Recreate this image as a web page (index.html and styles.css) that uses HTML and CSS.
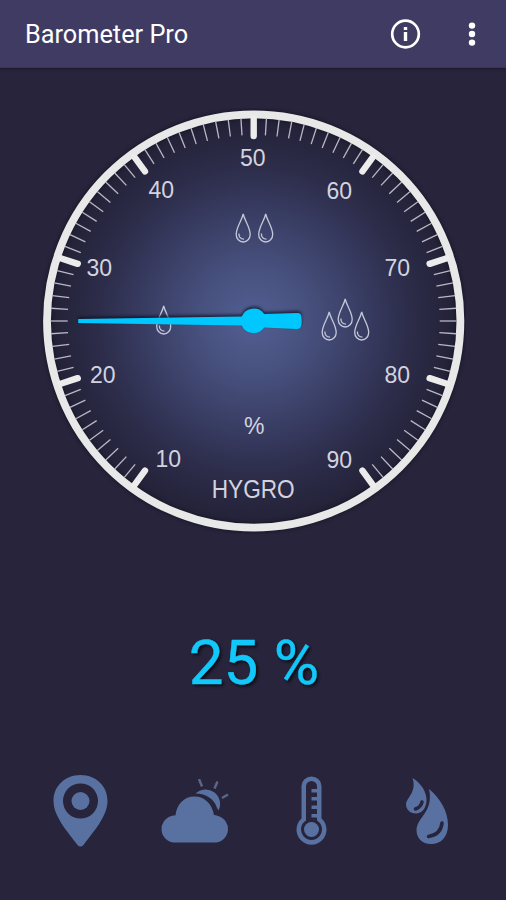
FILE: index.html
```html
<!DOCTYPE html>
<html lang="en">

<head>
    <meta charset="UTF-8">
    <meta name="viewport" content="width=device-width, initial-scale=1.0">
    <title>Barometer Pro</title>
    <link rel="stylesheet" href="styles.css">
</head>

<body>

    <header class="toolbar">
        <h1 class="title">Barometer Pro</h1>
        <button class="icon-btn" aria-label="Info">
            <svg width="32" height="32" viewBox="0 0 32 32">
                <circle cx="16.500" cy="16" r="13.3" fill="none" stroke="#fff" stroke-width="2.7" />
                <rect x="14.800" y="14" width="3.400" height="9" fill="#fff" />
                <rect x="14.800" y="9" width="3.400" height="3" fill="#fff" />
            </svg>
        </button>
        <button class="icon-btn menu-btn" aria-label="Menu">
            <svg width="10" height="32" viewBox="0 0 10 32">
                <circle cx="5" cy="7.6" r="3.2" fill="#fff" />
                <circle cx="5" cy="16" r="3.2" fill="#fff" />
                <circle cx="5" cy="24.6" r="3.2" fill="#fff" />
            </svg>
        </button>
    </header>

    <main class="content">
        <svg class="dial" viewBox="-213.700 -213 426 426">
            <defs>
                <radialGradient id="face" gradientUnits="userSpaceOnUse" cx="0" cy="0" r="205">
                    <stop offset="0" stop-color="#525f93" />
                    <stop offset="0.25" stop-color="#48527f" />
                    <stop offset="0.5" stop-color="#3a3f66" />
                    <stop offset="0.75" stop-color="#2d2d4b" />
                    <stop offset="1" stop-color="#232136" />
                </radialGradient>
                <g id="drop">
                    <path d="M0-14C-1.5-7-7-1-7 6.500A7 7.500 0 0 0 7 6.500C7-1 1.500-7 0-14Z" />
                    <path d="M-4.300 5.500C-4.500 9-2.500 11.200.800 11.200" />
                </g>
            </defs>

            <circle class="face" r="207" />
            <circle class="ring" r="206.700" />
            <g id="ticks"></g>

            <g class="labels">
                <text x="-85.500" y="145.500">10</text>
                <text x="-151" y="62">20</text>
                <text x="-154.500" y="-45.500">30</text>
                <text x="-92.500" y="-123">40</text>
                <text x="-1" y="-155">50</text>
                <text x="85.500" y="-122.500">60</text>
                <text x="143.500" y="-45.500">70</text>
                <text x="143.500" y="62">80</text>
                <text x="85.500" y="146.500">90</text>
                <text x="0.500" y="113">%</text>
                <text class="name" x="-0.500" y="177" textLength="83" lengthAdjust="spacingAndGlyphs">HYGRO</text>
            </g>

            <g class="drops">
                <use href="#drop" x="-10.500" y="-93" />
                <use href="#drop" x="12" y="-93" />
                <use href="#drop" x="-90" y="-1" />
                <use href="#drop" x="75.500" y="5" />
                <use href="#drop" x="91.500" y="-8" />
                <use href="#drop" x="108" y="5" />
            </g>

            <g class="needle">
                <path d="M-175.500-2L-12-4.500A13 13 0 0 1 10.500-7L44-8Q47-8 47.500-5Q48.500 0 47.500 4.500Q47 8 43 8L10.500 6.500A13 13 0 0 1-12 4.500L-175.500 2Z" />
            </g>
        </svg>

        <div class="reading">25 %</div>
    </main>

    <nav class="tabs">
        <svg class="tab-icon" width="56" height="72" viewBox="0 0 56 72">
            <path fill-rule="evenodd" d="M27.500 0C12 0 .500 11 .500 26C.500 41 14 56 24.500 70Q27.500 73 30.500 70C41 56 54.500 41 54.500 26C54.500 11 43 0 27.500 0ZM27.500 8.500A17.500 17.500 0 1 1 27.500 43.500A17.500 17.500 0 1 1 27.500 8.500Z" />
            <circle cx="27.500" cy="26" r="9" />
        </svg>
        <svg class="tab-icon" width="72" height="64" viewBox="0 0 72 64">
            <path d="M14 63.500A13.500 13.500 0 0 1 11.500 37C14 36 15.500 37 15.500 36C17 25 24 17.500 34.500 17.500C45 17.500 52 25 54 36Q56 36 58 37A13.500 13.500 0 0 1 55.500 63.500Z" />
            <path d="M35.500 14.500A14.500 14.500 0 0 1 58.500 31.500L57 29C54.500 20 46 14.500 35.500 14.500Z" />
            <path class="ray" d="M39 0L42 7.500M57.500 2.500L54.500 9.500M68 15.500L62 19" />
        </svg>
        <svg class="tab-icon" width="32" height="71" viewBox="0 0 32 71">
            <path fill-rule="evenodd" d="M5.500 10A10 9.500 0 0 1 25.500 10V42.500A15 15 0 1 1 5.500 42.500ZM10 10.500V44.500A10.500 10.500 0 1 0 21 44.500V41.500H15.500V38H21V33H15.500V29.500H21V24.500H15.500V21H21V16.500H15.500V13H21V10.500A5.500 5.500 0 0 0 10 10.500Z" />
            <circle cx="15.500" cy="53.500" r="7.500" />
        </svg>
        <svg class="tab-icon" width="43" height="67" viewBox="0 0 43 67">
            <path d="M6.500 0C15 5 21 14 20.500 23.500C20 30 16 35.500 10 35.500C4 35.500 0 31.500 0 26C1 19 11 14 6.500 0Z" />
            <path d="M23 11C34 20 42 33 42 47C42 59 35 66 25 66C16 66 10.500 60 10.500 52C11 39 28 34 23 11Z" />
            <path class="shine" d="M16 24Q15 29 9.500 31M36 45Q35 56.500 22.500 58.500" />
        </svg>
    </nav>

    <script>
        // scale goes from 10 to 90, one tick per percent, 50 is at the top
        const ticks = document.getElementById('ticks');

        for (let value = 10; value <= 90; value++) {
            const major = value % 10 === 0;
            const line = document.createElementNS('http://www.w3.org/2000/svg', 'line');
            line.setAttribute('class', major ? 'tick major' : 'tick');
            line.setAttribute('y1', -203);
            line.setAttribute('y2', major ? -185 : -186);
            line.setAttribute('transform', `rotate(${(value - 50) * 3.6})`);
            ticks.appendChild(line);
        }
    </script>

</body>

</html>
```
FILE: styles.css
```css
* {
    box-sizing: border-box;
}

body {
    margin: 0;
    height: 900px;
    display: flex;
    flex-direction: column;
    background-color: #27243b;
    font-family: Roboto, sans-serif;
    overflow: hidden;
}

.toolbar {
    display: flex;
    align-items: center;
    height: 68px;
    padding: 0 29px 0 25px;
    background-color: #3f3b62;
    border-bottom: 1px solid #37345a;
    box-shadow: 0 1px 3px rgba(20, 18, 35, 0.6);
    color: #fff;
}

.title {
    flex: 1;
    margin: 2px 0 0;
    font-size: 25.3px;
    font-weight: 400;
}

.icon-btn {
    display: flex;
    padding: 0;
    border: 0;
    background: none;
    cursor: pointer;
}

.menu-btn {
    margin-left: 46px;
}

.content {
    display: flex;
    flex-direction: column;
    align-items: center;
}

.dial {
    width: 426px;
    height: 426px;
    margin-top: 40px;
}

.face {
    fill: url(#face);
}

.ring {
    fill: none;
    stroke: #e9e8e8;
    stroke-width: 7.8;
    filter: drop-shadow(0 0 2px rgba(10, 8, 20, 0.7));
}

.tick {
    stroke: #b9b8c6;
    stroke-width: 1.3;
}

.tick.major {
    stroke: #ececec;
    stroke-width: 6.4;
    stroke-linecap: round;
}

.labels {
    fill: #d3d3df;
    font-family: "Liberation Sans", sans-serif;
    font-size: 23px;
    text-anchor: middle;
}

.labels .name {
    font-size: 25.5px;
}

.drops {
    fill: none;
    stroke: #c5c8da;
    stroke-width: 1.3;
}

.needle {
    fill: #00c8ff;
    filter: drop-shadow(0 -2px 1.5px rgba(10, 10, 25, 0.7));
}

.reading {
    margin-top: 93px;
    padding-left: 2px;
    color: #12c8fb;
    font-size: 62px;
    line-height: 72px;
    text-shadow: 2px 2px 3px rgba(0, 0, 0, 0.7);
    -webkit-text-stroke: 0.4px #12c8fb;
}

.tabs {
    display: grid;
    grid-template-columns: 107px 136px 110px auto;
    align-items: center;
    margin-top: auto;
    padding: 0 57px 53px 53px;
}

.tab-icon {
    fill: #5871a1;
}

.ray {
    stroke: #5b6688;
    stroke-width: 2.5;
}

.shine {
    fill: none;
    stroke: #27243b;
    stroke-width: 3.5;
    stroke-linecap: round;
}
```
